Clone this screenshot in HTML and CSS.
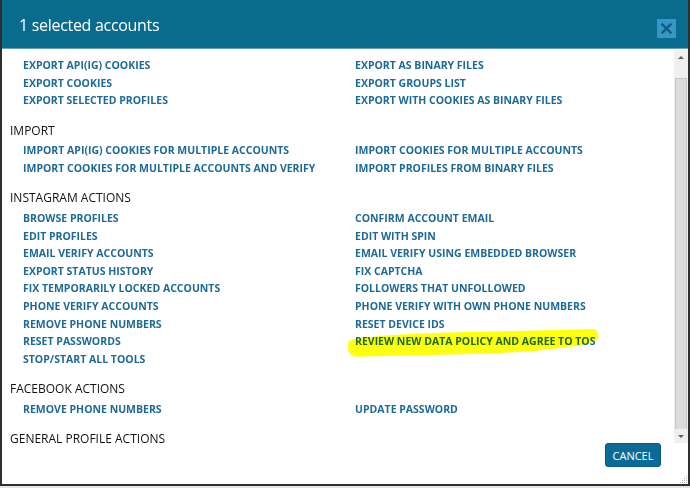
FILE: index.html
```html
<!DOCTYPE html>
<html>
<head>
<meta charset="utf-8">
<link rel="stylesheet" href="styles.css">
</head>
<body>
<div class="modal">
  <div class="modal-header">
    <h1 class="title">1 selected accounts</h1>
    <div class="close"><svg width="11" height="11" viewBox="0 0 11 11"><path d="M1.5 1.5 L9.5 9.5 M9.5 1.5 L1.5 9.5" stroke="#17587a" stroke-width="2.4" stroke-linecap="square"/></svg></div>
  </div>
  <div class="modal-body">
    <div class="content">
      <div class="grid first">
        <a class="item">EXPORT API(IG) COOKIES</a><a class="item">EXPORT AS BINARY FILES</a>
        <a class="item">EXPORT COOKIES</a><a class="item">EXPORT GROUPS LIST</a>
        <a class="item">EXPORT SELECTED PROFILES</a><a class="item">EXPORT WITH COOKIES AS BINARY FILES</a>
      </div>
      <div class="section">IMPORT</div>
      <div class="grid">
        <a class="item">IMPORT API(IG) COOKIES FOR MULTIPLE ACCOUNTS</a><a class="item">IMPORT COOKIES FOR MULTIPLE ACCOUNTS</a>
        <a class="item">IMPORT COOKIES FOR MULTIPLE ACCOUNTS AND VERIFY</a><a class="item">IMPORT PROFILES FROM BINARY FILES</a>
      </div>
      <div class="section">INSTAGRAM ACTIONS</div>
      <div class="grid">
        <a class="item">BROWSE PROFILES</a><a class="item">CONFIRM ACCOUNT EMAIL</a>
        <a class="item">EDIT PROFILES</a><a class="item">EDIT WITH SPIN</a>
        <a class="item">EMAIL VERIFY ACCOUNTS</a><a class="item">EMAIL VERIFY USING EMBEDDED BROWSER</a>
        <a class="item">EXPORT STATUS HISTORY</a><a class="item">FIX CAPTCHA</a>
        <a class="item">FIX TEMPORARILY LOCKED ACCOUNTS</a><a class="item">FOLLOWERS THAT UNFOLLOWED</a>
        <a class="item">PHONE VERIFY ACCOUNTS</a><a class="item">PHONE VERIFY WITH OWN PHONE NUMBERS</a>
        <a class="item">REMOVE PHONE NUMBERS</a><a class="item">RESET DEVICE IDS</a>
        <a class="item">RESET PASSWORDS</a><a class="item highlighted">REVIEW NEW DATA POLICY AND AGREE TO TOS</a>
        <a class="item">STOP/START ALL TOOLS</a>
      </div>
      <div class="section">FACEBOOK ACTIONS</div>
      <div class="grid">
        <a class="item">REMOVE PHONE NUMBERS</a><a class="item">UPDATE PASSWORD</a>
      </div>
      <div class="section">GENERAL PROFILE ACTIONS</div>
    </div>
    <div class="scrollbar">
      <div class="arrow up"></div>
      <div class="track"><div class="thumb"></div></div>
      <div class="arrow down"></div>
    </div>
  </div>
  <div class="modal-footer">
    <button class="btn-cancel">CANCEL</button>
    <svg class="grip" width="9" height="9" viewBox="0 0 9 9"><g fill="#b5b5b5"><rect x="7" y="1" width="1" height="1"/><rect x="5" y="3" width="1" height="1"/><rect x="7" y="3" width="1" height="1"/><rect x="3" y="5" width="1" height="1"/><rect x="5" y="5" width="1" height="1"/><rect x="7" y="5" width="1" height="1"/><rect x="1" y="7" width="1" height="1"/><rect x="3" y="7" width="1" height="1"/><rect x="5" y="7" width="1" height="1"/><rect x="7" y="7" width="1" height="1"/></g></svg>
  </div>
</div>
</body>
</html>
```
FILE: styles.css
```css
* { box-sizing: border-box; }
html, body { margin: 0; padding: 0; }
body {
  width: 690px;
  height: 488px;
  background: #e4e4e4;
  font-family: "Open Sans", "Noto Sans", sans-serif;
  overflow: hidden;
}
.modal {
  width: 690px;
  height: 486px;
  background: #fff;
  border-left: 2px solid #2e2e2e;
  border-right: 2px solid #2e2e2e;
  border-bottom: 2px solid #2e2e2e;
  display: flex;
  flex-direction: column;
}
.modal-header {
  height: 49px;
  flex: none;
  background: #086c8e;
  border-bottom: 1px solid #6c9fb3;
  display: flex;
  align-items: flex-start;
  justify-content: space-between;
  padding: 0 12px 0 17px;
}
.title {
  margin: 0;
  padding-top: 13px;
  font-weight: 400;
  font-size: 16px;
  line-height: 24px;
  color: #fff;
  letter-spacing: -0.3px;
}
.close {
  margin-top: 19px;
  width: 19px;
  height: 19px;
  background: #3497c6;
  display: flex;
  align-items: center;
  justify-content: center;
}
.modal-body {
  height: 394px;
  flex: none;
  display: flex;
}
.content {
  flex: 1;
  padding: 8px 0 0 8px;
}
.grid {
  display: grid;
  grid-template-columns: 293px 1fr;
  column-gap: 39px;
  padding-left: 13px;
}
.item {
  display: block;
  justify-self: start;
  max-width: 100%;
  position: relative;
  font-size: 10.5px;
  font-weight: 700;
  line-height: 17.6px;
  color: #1d6a98;
  white-space: nowrap;
  overflow: hidden;
}
.highlighted { overflow: visible; }
.highlighted::before {
  content: "";
  position: absolute;
  left: -7px;
  right: -2px;
  top: -1px;
  bottom: -3px;
  background: #ffff10;
  border-radius: 40% 6px 50% 10px / 30% 40% 60% 50%;
  transform: rotate(-1.4deg) skewX(-8deg);
  mix-blend-mode: multiply;
}
.section {
  margin-top: 11px;
  margin-bottom: 1.5px;
  font-size: 12px;
  line-height: 20px;
  color: #111;
  font-weight: 400;
}
.scrollbar {
  width: 14px;
  flex: none;
  margin-top: 1px;
  background: #f0f0f0;
  display: flex;
  flex-direction: column;
}
.arrow {
  height: 14px;
  flex: none;
  display: flex;
  align-items: center;
  justify-content: center;
}
.arrow::after {
  content: "";
  width: 0;
  height: 0;
  border-left: 3px solid transparent;
  border-right: 3px solid transparent;
}
.up::after { border-bottom: 3px solid #606060; }
.down::after { border-top: 3px solid #606060; }
.track {
  flex: 1;
  padding: 14px 1px 0 1px;
}
.thumb {
  height: 100%;
  background: #dcdcdc;
  border: 1px solid #c4c4c4;
  border-bottom: none;
}
.modal-footer {
  flex: 1;
  position: relative;
  display: flex;
  justify-content: flex-end;
  align-items: flex-start;
  padding-right: 27px;
}
.btn-cancel {
  width: 56px;
  height: 24px;
  background: #0c6b96;
  border: 1px solid #0a5c82;
  border-radius: 3px;
  color: #fff;
  font-family: "Open Sans", "Noto Sans", sans-serif;
  font-size: 11px;
  padding: 0;
}
.grip {
  position: absolute;
  right: 0;
  bottom: 0;
}
```
